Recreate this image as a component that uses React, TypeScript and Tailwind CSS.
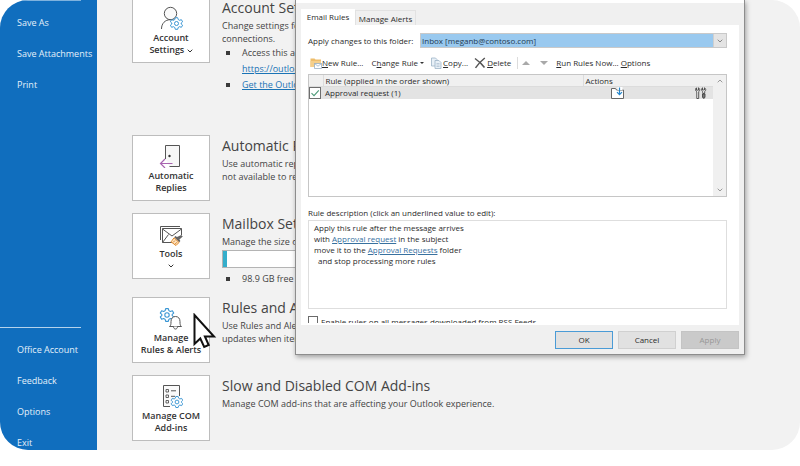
import type { ReactNode } from "react";

export default function App() {
  return (
    <div className="h-screen bg-white pb-4 font-['Open_Sans','Noto_Sans',sans-serif] text-[#444]">
      <div className="relative flex h-full overflow-hidden rounded-[28px] bg-[#f2f2f2]">
        <Sidebar />
        <AccountInfo />
        <RulesDialog />
        <Pointer />
      </div>
    </div>
  );
}

const topLinks = ["Save As", "Save Attachments", "Print"];
const bottomLinks = ["Office Account", "Feedback", "Options", "Exit"];

const Sidebar = () => (
  <nav className="flex w-[97px] flex-none flex-col bg-[#106ebe] text-[9px] text-[#e4f0fa]">
    <div className="mr-4 border-t border-[#7fb2de] pt-1.5">
      {topLinks.map((label) => (
        <SidebarLink key={label} label={label} />
      ))}
    </div>
    <div className="mt-auto mr-4 -mb-2 border-t border-[#b5d3ec] pt-1.5">
      {bottomLinks.map((label) => (
        <SidebarLink key={label} label={label} />
      ))}
    </div>
  </nav>
);

const SidebarLink = ({ label }: { label: string }) => (
  <a
    href="#"
    className="flex h-[31px] items-center pl-[17px] whitespace-nowrap hover:text-white"
  >
    {label}
  </a>
);

const AccountInfo = () => (
  <main className="-mt-[3px] min-w-0 flex-1 pl-[35px]">
    <Section
      className="mb-[42px]"
      icon={<AccountIcon />}
      label={
        <>
          Account
          <br />
          Settings <Chevron className="inline h-1 w-1.5 align-middle" />
        </>
      }
      title="Account Settings"
    >
      <p>
        Change settings for
        <br />
        connections.
      </p>
      <ul>
        <Bullet>
          Access this account
          <br />
          <a href="#" className="text-[#1a73b5] underline">
            https://outlook.com
          </a>
        </Bullet>
        <Bullet>
          <a href="#" className="text-[#1a73b5] underline">
            Get the Outlook app
          </a>
        </Bullet>
      </ul>
    </Section>

    <Section
      className="mb-3"
      icon={<DoorIcon />}
      label={
        <>
          Automatic
          <br />
          Replies
        </>
      }
      title="Automatic Replies"
    >
      <p>
        Use automatic replies
        <br />
        not available to respond
      </p>
    </Section>

    <Section
      className="mb-2.5"
      icon={<ToolsIcon />}
      label={
        <>
          Tools
          <Chevron className="mx-auto mt-1 h-1 w-1.5" />
        </>
      }
      title="Mailbox Settings"
    >
      <p>Manage the size of</p>
      <div className="mt-0.5 h-[18px] w-[200px] border border-[#b4b4b4] bg-white">
        <div className="h-full w-1 bg-[#35aecb]" />
      </div>
      <ul className="mt-[3px]">
        <Bullet>98.9 GB free of 99 GB</Bullet>
      </ul>
    </Section>

    <Section
      className="mb-3"
      icon={<BellIcon />}
      label={
        <>
          Manage
          <br />
          Rules &amp; Alerts
        </>
      }
      title="Rules and Alerts"
    >
      <p>
        Use Rules and Alerts
        <br />
        updates when items
      </p>
    </Section>

    <Section
      icon={<AddinIcon />}
      label={
        <>
          Manage COM
          <br />
          Add-ins
        </>
      }
      title="Slow and Disabled COM Add-ins"
    >
      <p>Manage COM add-ins that are affecting your Outlook experience.</p>
    </Section>
  </main>
);

const Section = ({
  icon,
  label,
  title,
  className = "",
  children,
}: {
  icon: ReactNode;
  label: ReactNode;
  title: string;
  className?: string;
  children: ReactNode;
}) => (
  <section className={`flex items-start gap-3 ${className}`}>
    <button className="flex h-[66px] w-[78px] flex-none flex-col items-center border border-[#bdbdbd] bg-white pt-2 text-[9px] leading-3 font-semibold text-[#333]">
      {icon}
      <span className="mt-0.5">{label}</span>
    </button>
    <div className="min-w-0 text-[9px] leading-[13px] whitespace-nowrap">
      <h2 className="text-sm leading-[22px]">{title}</h2>
      {children}
    </div>
  </section>
);

const Bullet = ({ children }: { children: ReactNode }) => (
  <li className="flex gap-3 pl-1 leading-4">
    <span className="mt-1.5 h-1 w-1 flex-none bg-[#3b3b3b]" />
    <span>{children}</span>
  </li>
);

const RulesDialog = () => (
  <div
    role="dialog"
    aria-label="Rules and Alerts"
    className="absolute top-0 right-[55px] left-[295px] border border-t-0 border-[#8d8d8d] bg-[#f0f0f0] px-[5px] text-[8px] text-[#2b2b2b] shadow-[1px_2px_5px_rgba(0,0,0,0.35)]"
  >
    <div className="-mx-[5px] h-[3px] bg-white" />
    <div role="tablist" className="flex items-end pt-1.5">
      <button
        role="tab"
        aria-selected="true"
        className="h-4 w-[54px] bg-white leading-4 whitespace-nowrap"
      >
        Email Rules
      </button>
      <button
        role="tab"
        aria-selected="false"
        className="h-[15px] w-[61px] border border-b-0 border-[#e2e2e2] pt-px leading-3 whitespace-nowrap"
      >
        Manage Alerts
      </button>
    </div>

    <div className="bg-white pt-2 pr-3 pb-0.5 pl-[7px]">
      <div className="flex items-center">
        <label htmlFor="folder" className="w-28 flex-none whitespace-nowrap">
          Apply changes to this folder:
        </label>
        <div className="relative h-[15px] flex-1 border border-[#c9c9c9] bg-white">
          <select
            id="folder"
            className="block h-full w-full appearance-none bg-[#99c9ef] pl-px leading-3 text-[#1f3a52]"
          >
            <option>Inbox [meganb@contoso.com]</option>
          </select>
          <span className="pointer-events-none absolute inset-y-0 right-0 flex w-[13px] items-center justify-center border-l border-[#cfcfcf] bg-[#e4e4e4] text-[#888]">
            <Chevron className="h-1 w-1.5" />
          </span>
        </div>
      </div>

      <Toolbar />
      <RulesTable />

      <p id="description-label" className="mt-[9px] leading-[14px]">
        Rule description (click an underlined value to edit):
      </p>
      <div
        aria-labelledby="description-label"
        className="h-[89px] border border-[#dedede] pt-px pl-[5px] leading-[11px]"
      >
        <p>Apply this rule after the message arrives</p>
        <p>
          with <RuleLink>Approval request</RuleLink> in the subject
        </p>
        <p>
          move it to the <RuleLink>Approval Requests</RuleLink> folder
        </p>
        <p className="pl-1">and stop processing more rules</p>
      </div>

      <div className="mt-[7px] h-[7px] overflow-hidden">
        <label className="flex items-start gap-[3px] leading-[11px]">
          <input
            type="checkbox"
            className="h-2.5 w-2.5 flex-none appearance-none border border-[#6b6b6b] bg-white"
          />
          Enable rules on all messages downloaded from RSS Feeds
        </label>
      </div>
    </div>

    <div className="flex justify-end gap-[5px] pt-1.5 pb-[5px]">
      <button className="h-[18px] w-[58px] border border-[#4a9bd6] bg-[#e1e1e1]">
        OK
      </button>
      <button className="h-[18px] w-[58px] border border-[#d0d0d0] bg-[#e1e1e1]">
        Cancel
      </button>
      <button
        disabled
        className="h-[18px] w-[58px] border border-[#c4c4c4] bg-[#cacaca] text-[#979797]"
      >
        Apply
      </button>
    </div>
  </div>
);

const RuleLink = ({ children }: { children: ReactNode }) => (
  <a href="#" className="text-[#38719f] underline">
    {children}
  </a>
);

const Toolbar = () => (
  <div
    role="toolbar"
    className="flex h-[26px] items-center pt-1 whitespace-nowrap"
  >
    <button className="ml-0.5 flex items-center">
      <NewRuleIcon />
      <span>
        <u>N</u>ew Rule...
      </span>
    </button>
    <button className="ml-2 flex items-center">
      <span>
        C<u>h</u>ange Rule
      </span>
      <span className="ml-0.5 border-x-2 border-t-2 border-x-transparent border-t-[#333]" />
    </button>
    <button className="ml-1.5 flex items-center gap-px">
      <CopyIcon />
      <span>
        <u>C</u>opy...
      </span>
    </button>
    <button className="ml-1.5 flex items-center gap-px">
      <DeleteIcon />
      <span>
        <u>D</u>elete
      </span>
    </button>
    <span className="ml-1.5 h-3 w-px bg-[#dcdcdc]" />
    <button aria-label="Move up" className="ml-1">
      <span className="block border-x-4 border-b-4 border-x-transparent border-b-[#a9a9a9]" />
    </button>
    <button aria-label="Move down" className="ml-2.5">
      <span className="block border-x-4 border-t-4 border-x-transparent border-t-[#a9a9a9]" />
    </button>
    <button className="ml-2">
      <u>R</u>un Rules Now...
    </button>
    <button className="ml-0.5">
      <u>O</u>ptions
    </button>
  </div>
);

const RulesTable = () => (
  <div className="flex h-[123px] border border-[#c6c6c6] bg-white">
    <div className="flex-1">
      <table className="w-full table-fixed text-left">
        <thead className="bg-[#f0f0f0]">
          <tr className="leading-[11px]">
            <th className="w-[14px] border-r border-b border-[#dcdcdc]" />
            <th className="border-r border-b border-[#dcdcdc] pl-0.5 font-normal">
              Rule (applied in the order shown)
            </th>
            <th className="w-[130px] border-b border-[#dcdcdc] pl-0.5 font-normal">
              Actions
            </th>
          </tr>
        </thead>
        <tbody>
          <tr className="bg-[#e3e3e3] leading-3">
            <td>
              <label className="relative block h-3 w-3">
                <input
                  type="checkbox"
                  defaultChecked
                  aria-label="Approval request"
                  className="peer block h-3 w-3 appearance-none border border-[#6e6e6e] bg-white"
                />
                <svg
                  viewBox="0 0 12 12"
                  className="pointer-events-none absolute inset-0 hidden h-3 w-3 peer-checked:block"
                >
                  <path
                    d="M2.5 6.2 5 8.6 9.8 3.4"
                    fill="none"
                    stroke="#4c9a78"
                    strokeWidth="1.1"
                  />
                </svg>
              </label>
            </td>
            <td className="pl-0.5">Approval request (1)</td>
            <td>
              <div className="flex items-center justify-between pr-1.5 pl-7">
                <MoveIcon />
                <WrenchIcon />
              </div>
            </td>
          </tr>
        </tbody>
      </table>
    </div>
    <div className="flex w-[13px] flex-none flex-col items-center justify-between bg-[#f0f0f0] py-1 text-[#999]">
      <Chevron className="h-1 w-1.5 rotate-180" />
      <Chevron className="h-1 w-1.5" />
    </div>
  </div>
);

const Chevron = ({ className = "" }: { className?: string }) => (
  <svg viewBox="0 0 6 4" className={className}>
    <path d="M.7.7 3 3 5.3.7" fill="none" stroke="currentColor" />
  </svg>
);

// Six-toothed gear centred on 0,0
const Gear = ({ x, y, scale = 1 }: { x: number; y: number; scale?: number }) => (
  <g
    transform={`translate(${x} ${y}) scale(${scale})`}
    fill="#fff"
    stroke="#3a96d4"
    strokeWidth="1"
    strokeLinejoin="round"
  >
    <path d="M-1.2-5.8H1.2L1.7-4 3-3.2 4.9-3.8 6.1-1.7 4.7-.5V.5L6.1 1.7 4.9 3.8 3 3.2 1.7 4 1.2 5.8H-1.2L-1.7 4-3 3.2-4.9 3.8-6.1 1.7-4.7.5V-.5L-6.1-1.7-4.9-3.8-3-3.2-1.7-4Z" />
    <circle r="2" />
  </g>
);

const AccountIcon = () => (
  <svg viewBox="0 0 24 24" className="h-6 w-6">
    <circle cx="11.5" cy="7.5" r="6.2" fill="#fafafa" stroke="#555" />
    <path
      d="M2.500 23c0-5.500 3.500-9.300 9-9.300 1.500 0 2.500.2 3.500.7"
      fill="none"
      stroke="#555"
    />
    <Gear x={17.5} y={17.5} />
  </svg>
);

const DoorIcon = () => (
  <svg viewBox="0 0 24 24" className="h-6 w-6">
    <path d="M6.500 15V1.500h14v21h-10" fill="#f7f7f7" stroke="#555" />
    <circle cx="10.500" cy="12" r="1.200" fill="#333" />
    <path
      d="M13.500 19.500H1.500M6 15 1.500 19.500 6 24"
      fill="none"
      stroke="#a864b0"
      strokeWidth="1.200"
    />
  </svg>
);

const ToolsIcon = () => (
  <svg viewBox="0 0 24 24" className="h-6 w-6">
    <path d="M1.500 18V4.500H21" fill="none" stroke="#555" />
    <path d="M13 20.500H3.500v-14h19V13" fill="#fff" stroke="#555" />
    <path
      d="m3.500 7 9.500 7 9.500-7M3.500 20.500l6-8"
      fill="none"
      stroke="#555"
    />
    <path
      d="m22.200 13 1.600 1.600-3.400 3 1 1.400-1.200 1.200-5-5 1.200-1.200 1.600 1Z"
      fill="#666"
    />
    <path
      d="m15 15.800 5 4.700-3 3-5-3.700 1-1.200Z"
      fill="#fbe3c3"
      stroke="#e0892b"
    />
    <path d="m14 20.500 2-2M16 22.200l2-2" stroke="#e0892b" />
  </svg>
);

const BellIcon = () => (
  <svg viewBox="0 0 24 24" className="h-6 w-6">
    <Gear x={8} y={9} scale={1.1} />
    <path
      d="M10.500 20.500c1.300-1 1.500-2 1.500-5 0-3 1.700-5 4.500-5s4.500 2 4.500 5c0 3 .2 4 1.500 5Z"
      fill="#fff"
      stroke="#555"
    />
    <path d="M14.500 20.500c0 3.400 4 3.400 4 0" fill="#fff" stroke="#555" />
  </svg>
);

const AddinIcon = () => (
  <svg viewBox="0 0 24 24" className="h-6 w-6">
    <path d="M11 22.500H4.500v-21h16V12" fill="#fafafa" stroke="#555" />
    <path
      d="M7 5.500h2.500V8H7ZM7 11h2.500v2.500H7ZM7 16.500h2.500V19H7Z"
      fill="none"
      stroke="#555"
      strokeWidth=".9"
    />
    <path d="M12 6.800h5M12 12.300h4" stroke="#555" />
    <Gear x={18} y={18} scale={0.95} />
  </svg>
);

const NewRuleIcon = () => (
  <svg viewBox="0 0 12 12" className="h-3 w-3">
    <path d="M.5 1.500h4l1 1H11V10H.5Z" fill="#eebd6b" />
    <path d="M.5 4H11v6H.5Z" fill="#f5cf8b" />
    <path
      d="M4.500 6.500h7v5h-7Z"
      fill="#fff"
      stroke="#8aa5bd"
      strokeWidth=".7"
    />
    <path
      d="m4.500 6.500 3.500 2.700 3.500-2.700"
      fill="none"
      stroke="#8aa5bd"
      strokeWidth=".7"
    />
  </svg>
);

const CopyIcon = () => (
  <svg viewBox="0 0 12 12" className="h-3 w-3">
    <g fill="#e8f0f7" stroke="#9db4c8" strokeWidth=".8">
      <path d="M1.500 1h4l1.500 1.500V9H1.500Z" />
      <path d="M5 3.500h4L11 5.500v6H5Z" />
    </g>
    <path
      d="M6.500 6.500h3M6.500 8h3M6.500 9.500h3"
      stroke="#9db4c8"
      strokeWidth=".6"
    />
  </svg>
);

const DeleteIcon = () => (
  <svg viewBox="0 0 12 12" className="h-3 w-3">
    <path
      d="M1 1.500c3.500 2.500 7 5.500 9.500 9M10.800 1C7 4 4 7 1.500 10.800"
      fill="none"
      stroke="#555"
      strokeWidth="1.500"
    />
  </svg>
);

const MoveIcon = () => (
  <svg viewBox="0 0 13 12" className="h-3 w-[13px]">
    <path d="M.5 1.500h4l1 1.500h7v8.500H.5Z" fill="#fff" stroke="#666" />
    <path d="M6.500 0h5v3h-5Z" fill="#fff" />
    <path
      d="M8.500.5v7M6 5.200l2.500 2.500L11 5.200"
      fill="none"
      stroke="#2486cc"
      strokeWidth="1.200"
    />
  </svg>
);

const WrenchIcon = () => (
  <svg viewBox="0 0 12 12" className="h-3 w-3">
    <g fill="#fff" stroke="#444" strokeWidth=".9">
      <path d="M1.500.8v2.400h2V.8c1.500.7 1.700 2.900.2 3.900v6.800H1.800V4.700C0 3.800.2 1.500 1.500.8Z" />
      <path d="M7.500.8v2.200h2V.8c1.500.7 1.700 2.700.2 3.700v2H7.800v-2C6 3.600 6.200 1.500 7.500.8Z" />
      <path d="M7.500 7h2.500v3l-.7 1.200H8.200L7.500 10Z" fill="#777" />
    </g>
  </svg>
);

const Pointer = () => (
  <svg
    viewBox="0 0 24 36"
    className="pointer-events-none absolute top-[313px] left-[193px] h-9 w-6"
  >
    <path
      d="M1.500 2v29l5.800-5.500 3.900 8.500 4.500-2-3.800-8.500H21Z"
      fill="#fff"
      stroke="#111"
      strokeWidth="2"
    />
  </svg>
);
